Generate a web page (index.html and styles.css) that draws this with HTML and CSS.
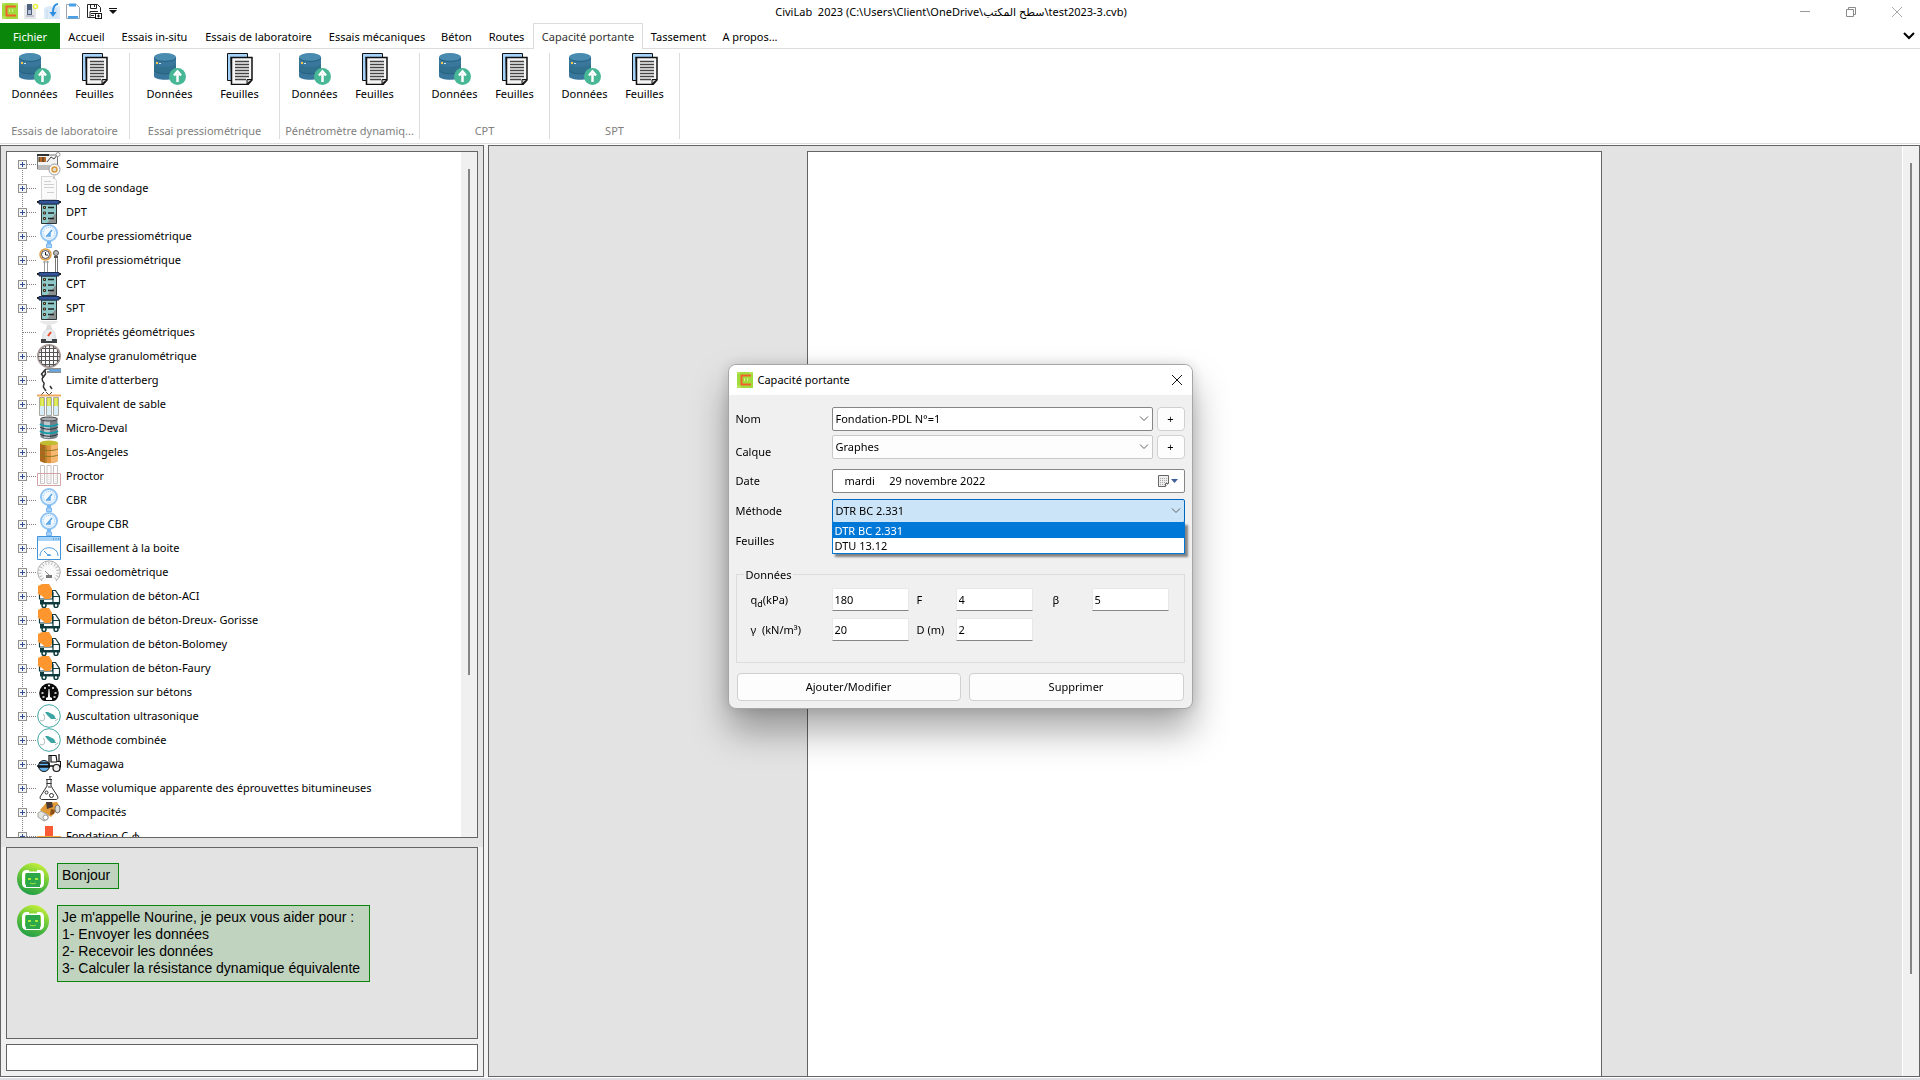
FILE: index.html
```html
<!DOCTYPE html>
<html lang="fr">
<head>
<meta charset="utf-8">
<title>CiviLab 2023</title>
<link rel="stylesheet" href="styles.css">
</head>
<body>
<svg class="sprite" aria-hidden="true">
  <symbol id="i-logo" viewBox="0 0 16 16"><rect width="16" height="16" fill="#9fdc3c"/><path d="M0 0h3v2H0zM12 0h4v2h-4zM0 13h4v3H0z" fill="#b4e455"/><path d="M14 3.500H4.500v9H14" fill="none" stroke="#f4602c" stroke-width="2"/><path d="M7.500 6v3M10.500 6v3" stroke="#d9ec8c"/></symbol>
  <symbol id="i-new" viewBox="0 0 16 16"><path d="M1 2h12v14H1z" fill="#e4e6ea"/><path d="M4 1h5v11H4z" fill="#4f617c"/><path d="M5 7h3v4H5z" fill="#b7c4d8"/><path d="M3 12h8v2H3z" fill="#c4c8ce"/><circle cx="12.500" cy="3.500" r="2" fill="#fff" stroke="#e8ee3c" stroke-width="1.500"/></symbol>
  <symbol id="i-open" viewBox="0 0 16 16"><path d="M0 5l5-2 6 1 5-1v13H0z" fill="#dcebf7"/><path d="M3 6v10M12 5v11" stroke="#c6dcef"/><path d="M14 1c-4 0-5 3-5 9" fill="none" stroke="#2f8ee0" stroke-width="2"/><path d="M5.500 9h7L9 14z" fill="#2f8ee0"/></symbol>
  <symbol id="i-page" viewBox="0 0 16 16"><path d="M1.500 1.500h10l3 3v11h-13z" fill="#fff" stroke="#9aa3ad"/><path d="M4 .500h7v3H4zM3 13h10v2.500H3z" fill="#4aa0e6"/></symbol>
  <symbol id="i-save" viewBox="0 0 16 16"><path d="M9 14.500H1.500v-13h10l3 3V9M4.500 1.500v4h6v-4M8.500 2v2M4 14V8.500h8" fill="none" stroke="#222"/><path d="M5 10.500h4M5 12.500h3" stroke="#222"/><rect x="9.500" y="10.500" width="6" height="5" fill="#fff" stroke="#111"/><path d="M11 13h3M12.500 11.500v3" stroke="#111"/></symbol>
  <symbol id="i-data" viewBox="0 0 32 32"><path d="M0 4v19c0 5 22 5 22 0V4z" fill="#39789c"/><path d="M0 10c0 5 22 5 22 0v7c0 5-22 5-22 0z" fill="#32708f"/><ellipse cx="11" cy="4" rx="11" ry="4" fill="#4a8bb0"/><path d="M0 5c1 4.500 21 4.500 22 0M0 17c1 5 21 5 22 0" fill="none" stroke="#27617e"/><path d="M2 9h2v2H2z" fill="#f5c84b"/><path d="M5 10h2v1H5z" fill="#c9e5f2"/><circle cx="23.500" cy="23.500" r="8.500" fill="#48b795"/><path d="M23.500 29v-8M20 22.500l3.500-4 3.500 4" fill="none" stroke="#fff" stroke-width="2.500"/></symbol>
  <symbol id="i-sheets" viewBox="0 0 26 32"><path d="M.500.500h20v27H.500z" fill="#a5d2f8" stroke="#111"/><path d="M4.500 4.500V31M4 4.500h21V27l-4 4.500H4.500z" fill="#f4f4f4" stroke="#111" stroke-width="1.500"/><path d="M8 8.500h14M8 11.500h14M8 14.500h14M8 17.500h14M8 20.500h14M8 23.500h14M8 26.500h11" stroke="#444" stroke-width="1.500"/><path d="M20 31v-4.500h5z" fill="#bbb" stroke="#111"/></symbol>
  <symbol id="i-summary" viewBox="0 0 24 24"><path d="M.500 3h20v14H.500z" fill="#f4f4f4" stroke="#777"/><path d="M0 2h12v2H0z" fill="#333"/><path d="M2 5h7v5H2z" fill="#b4682a"/><path d="M2 5v5M6 5v5" stroke="#332"/><path d="M1 13h12v4H1z" fill="#bdbdbd"/><path d="M10 10l4-5 3 2 4-5" fill="none" stroke="#444"/><circle cx="21" cy="2.500" r="2" fill="#fff" stroke="#999"/><circle cx="17.500" cy="17.500" r="5.500" fill="#fafafa" stroke="#999"/><circle cx="17.500" cy="17.500" r="2.500" fill="#ddd" stroke="#d99a35" stroke-width="1.500"/></symbol>
  <symbol id="i-log" viewBox="0 0 24 24"><path d="M4.500.500h11l4 4v19h-15z" fill="#fafafa" stroke="#d5d5d5"/><path d="M7 5.500h7M7 8.500h10M7 11.500h10M10 16.500h7" stroke="#cfcfcf"/><path d="M17 0v3" stroke="#aaa"/></symbol>
  <symbol id="i-probe" viewBox="0 0 24 24"><path d="M4.500 4h15v19.500h-15z" fill="#8fc9c8" stroke="#2d3436"/><path d="M19 13v10h-9z" fill="#8b9292"/><path d="M2 .500h20V4H2z" fill="#34569a" stroke="#1c2c50"/><path d="M0 2h2M22 2h2" stroke="#222" stroke-width="2"/><g fill="#e9a24a" stroke="#333"><path d="M6.500 6.500h2v2h-2zM6.500 12h2v2h-2zM6.500 17.500h2v2h-2z"/></g><path d="M11 7.500h6M11 13h6M11 18.500h6" stroke="#222" stroke-width="1.500"/></symbol>
  <symbol id="i-gauge" viewBox="0 0 24 24"><circle cx="12" cy="9" r="8" fill="#f4faff" stroke="#8fc4f5" stroke-width="2"/><circle cx="12" cy="9" r="5.500" fill="none" stroke="#8fc4f5" stroke-dasharray="1 1"/><path d="M10 12l5-6M9 12h4v-3" fill="none" stroke="#5aa4e6" stroke-width="1.500"/><path d="M12 17v3" stroke="#7ab8f2" stroke-width="4"/><path d="M9.500 20h5v3.500h-5z" fill="#a9d2f8" stroke="#7ab8f2"/></symbol>
  <symbol id="i-profile" viewBox="0 0 24 24"><path d="M7.500 13v11M10.500 13v11M6 14h6" stroke="#999"/><circle cx="8.500" cy="6.500" r="5.500" fill="#fff" stroke="#dd9d45" stroke-width="1.500"/><circle cx="8.500" cy="6.500" r="4" fill="none" stroke="#444"/><path d="M8.500 4v3H11" fill="none" stroke="#222"/><circle cx="19" cy="5" r="2.500" fill="#bbb" stroke="#555"/><path d="M17 8h4v2h-4z" fill="#555"/><path d="M18.500 10v14M20.500 10v14" stroke="#777"/></symbol>
  <symbol id="i-scale" viewBox="0 0 24 24"><path d="M3 1h18c-2 5-16 5-18 0z" fill="#e8e8e8"/><path d="M10 5h4l1 4H9z" fill="#ddd"/><path d="M6 20c-1-6 1-11 6-11s7 5 6 11z" fill="#e9edef" stroke="#d3d7d9"/><path d="M11 16l3-4" stroke="#ea4a2c" stroke-width="2"/><path d="M4 19h5v2h6v-2h5v4H4z" fill="#3c4246"/></symbol>
  <symbol id="i-sieve" viewBox="0 0 24 24"><circle cx="12" cy="12" r="11" fill="#fafafa" stroke="#a89a98" stroke-width="2"/><path d="M4.500 5v14M8.500 2v20M12.500 1v22M16.500 2v20M20.500 6v12M5 4.500h14M2 8.500h20M1 12.500h22M2 16.500h20M5 20.500h14" stroke="#555"/></symbol>
  <symbol id="i-atterberg" viewBox="0 0 24 24"><path d="M7 3c1-2 3-2 4-2h13M10 4h14" fill="none" stroke="#222"/><path d="M12 2.500h12" stroke="#5ca9ee" stroke-width="2"/><path d="M8 2L4.500 6l2 3 2-3zM6 9c-2 2 0 5 1 6s-2 3 0 5l2 3M13 18l2 3" fill="none" stroke="#333" stroke-width="1.500"/></symbol>
  <symbol id="i-tubes" viewBox="0 0 24 24"><path d="M4 3l3-3M9 0l3 3 3-3" fill="none" stroke="#444"/><path d="M0 3.500h24" stroke="#efa95c" stroke-width="2"/><path d="M2.500 5.500h5v18h-5zM9.500 5.500h5v18h-5zM16.500 5.500h5v18h-5z" fill="#d7edf7" stroke="#a8a8a0"/><path d="M3 6h4v8H3zM10 6h4v8h-4zM17 6h4v8h-4z" fill="#d3df35"/><path d="M5 6v8M12 6v8M19 6v8" stroke="#eef49a"/></symbol>
  <symbol id="i-drum" viewBox="0 0 24 24"><path d="M3.500 3v18c3 3 14 3 17 0V3z" fill="#777f86"/><path d="M7 3h6v19H7z" fill="#c0c6ca"/><path d="M3 8c4 3 14 3 18 0M3 15c4 3 14 3 18 0" fill="none" stroke="#149bab" stroke-width="2"/><path d="M3 11c4 3 14 3 18 0M3 18c4 3 14 3 18 0" fill="none" stroke="#26313a"/><ellipse cx="12" cy="3" rx="8.500" ry="2" fill="#a7adb2" stroke="#444"/></symbol>
  <symbol id="i-barrel" viewBox="0 0 24 24"><path d="M3 3v18c4 3 14 3 18 0V3z" fill="#e0913d"/><path d="M3 3v18l5 2V4z" fill="#ad681e"/><path d="M14 4h7v17l-7 2z" fill="#f6b871"/><path d="M3 9c4 2 14 2 18 0M3 15c4 2 14 2 18 0M9 4v19" fill="none" stroke="#8d7620"/><ellipse cx="12" cy="3" rx="9" ry="2.500" fill="#c2bc31"/></symbol>
  <symbol id="i-proctor" viewBox="0 0 24 24"><path d="M3.500 1.500h4v18h-4zM10 1.500h4v18h-4zM16.500 1.500h4v18h-4z" fill="#fff" stroke="#c9c4c4"/><path d="M.500 9.500h23v12H.500z" fill="none" stroke="#d4a2a2"/><path d="M5 11v8M12 11v8M19 11v8" stroke="#d7c0c0" stroke-dasharray="1 1"/></symbol>
  <symbol id="i-window" viewBox="0 0 24 24"><path d="M.500.500h23v23H.500z" fill="#fff" stroke="#3f93dd"/><path d="M1 1h22v4H1z" fill="#a8d4f8"/><path d="M16 3h1M18.500 3h1M21 3h1" stroke="#2274be"/><path d="M3 20c0-11 18-11 18 0M12 20L7 15" fill="none" stroke="#4a9ade"/><path d="M10 20a2 2 0 0 1 4 0z" fill="#4a9ade"/></symbol>
  <symbol id="i-dial" viewBox="0 0 24 24"><path d="M5 21a11.300 11.300 0 1 1 14 0" fill="#fafafa" stroke="#a9a9a9"/><path d="M6 19a9 9 0 1 1 12 0" fill="none" stroke="#bcbcbc" stroke-width="3" stroke-dasharray="1 2"/><path d="M12 15L8 11" stroke="#888"/><path d="M9 15h6v3H9z" fill="#777"/></symbol>
  <symbol id="i-mixer" viewBox="0 0 24 24"><path d="M2.500 9v6h13V6.500h3l4 6V19H16V8" fill="none" stroke="#0d3b3e" stroke-width="1.200"/><path d="M3 18h20v2.500H3zM3 16h4v3H3z" fill="#0d3b3e"/><path d="M16 12.500h6" stroke="#0d3b3e"/><circle cx="7" cy="21.500" r="2" fill="#fff" stroke="#0d3b3e" stroke-width="1.500"/><circle cx="19" cy="21.500" r="2" fill="#fff" stroke="#0d3b3e" stroke-width="1.500"/><path d="M1 2l4-2h7l3 5v7l-2 3H8L5 12 1 10z" fill="#fd962f"/></symbol>
  <symbol id="i-press" viewBox="0 0 24 24"><path d="M5 20a9.800 9.800 0 1 1 14 0l-2 1H7z" fill="#0a0a0a"/><path d="M11.500 9h1l.500 8 2 1v2H9v-2l2-1z" fill="#fff"/><path d="M4.500 13h2M17.500 13h2M7 8h2M15 8h2M11 5.500h2M5.500 17h2M16.500 17h2" stroke="#fff" stroke-width="1.500"/></symbol>
  <symbol id="i-sonic" viewBox="0 0 24 24"><circle cx="12" cy="12" r="11.300" fill="#fff" stroke="#3ca5a1"/><path d="M8 8l3 0 6 3 2 4-5 0-4-4z" fill="#3ca5a1"/><path d="M3 16c6 4 5-6 3-6M18 17l3-2" fill="none" stroke="#aab5b8"/></symbol>
  <symbol id="i-tractor" viewBox="0 0 24 24"><circle cx="7" cy="14" r="5.500" fill="#66b4ee" stroke="#111"/><path d="M0 14h16M2 11h10v4H1" fill="none" stroke="#111" stroke-width="1.500"/><path d="M12 10V3.500h7l1 6h3.500V15H17M14 4v6h6M22 2v7" fill="none" stroke="#111" stroke-width="1.200"/><circle cx="19.500" cy="16" r="3.500" fill="#eee" stroke="#111" stroke-width="1.200"/></symbol>
  <symbol id="i-flask" viewBox="0 0 24 24"><path d="M9 3.500h6M9.500 7.500h5M10 4v6L3 21c0 2 1 2.500 2 2.500h14c1 0 2-.500 2-2.500L14 10V4" fill="#fff" stroke="#333"/><path d="M12 0h3M13 0v3" stroke="#444"/><circle cx="9.500" cy="16.500" r="1.500" fill="none" stroke="#333"/><circle cx="14.500" cy="19.500" r="2" fill="none" stroke="#333"/><path d="M11 10h3v2h-3z" fill="#999"/></symbol>
  <symbol id="i-roller" viewBox="0 0 24 24"><path d="M3 10l6-7 11-1 3 5-9 10z" fill="#e19a37"/><path d="M9 2h6l1 5-6 2z" fill="#4b3934"/><path d="M14 9l4 1-1 4-4 1z" fill="#8d4f19"/><ellipse cx="20.500" cy="9" rx="2.500" ry="4" fill="#ddd" stroke="#777"/><path d="M1 13l3-2 7 4v4l-4 2-6-4z" fill="#e4e4e0" stroke="#a5a39b"/><circle cx="8.500" cy="17.500" r="2.500" fill="#fff" stroke="#999"/></symbol>
  <symbol id="i-footing" viewBox="0 0 24 24"><path d="M8 2h8v10H8z" fill="#fb5b34"/><path d="M0 12h24v6H0z" fill="#f8a63a"/></symbol>
  <symbol id="i-bot" viewBox="0 0 32 32"><defs><linearGradient id="botfill" x1=".7" y1="0" x2=".3" y2="1"><stop offset="0" stop-color="#c8f13a"/><stop offset=".5" stop-color="#63c43a"/><stop offset="1" stop-color="#1f9c48"/></linearGradient></defs><circle cx="16" cy="16" r="16" fill="url(#botfill)"/><rect x="6.500" y="8.500" width="19" height="15" rx="3" fill="none" stroke="#fff" stroke-width="3"/><path d="M12 7.500h8" stroke="#8fd934" stroke-width="2"/><path d="M9 10h14v14H9z" fill="#2ca74a"/><path d="M11 15h3v2h-3zM18 15h3v2h-3z" fill="#a9e83c"/><path d="M13 20c1 1 5 1 6 0" fill="none" stroke="#a9e83c"/></symbol>
  <symbol id="i-chev" viewBox="0 0 10 6"><path d="M1 .500l4 4 4-4" fill="none" stroke="#606060"/></symbol>
</svg>

<div class="app">
  <header class="titlebar">
    <div class="quick">
      <svg class="q"><use href="#i-logo"/></svg>
      <button aria-label="Nouveau"><svg class="q"><use href="#i-new"/></svg></button>
      <button aria-label="Ouvrir"><svg class="q"><use href="#i-open"/></svg></button>
      <button aria-label="Page"><svg class="q"><use href="#i-page"/></svg></button>
      <button aria-label="Enregistrer"><svg class="q"><use href="#i-save"/></svg></button>
      <button aria-label="Personnaliser" class="drop"><svg class="more" viewBox="0 0 8 6"><path d="M0 .500h8" stroke="#111"/><path d="M0 2h8L4 6z" fill="#111"/></svg></button>
    </div>
    <h1 class="title">CiviLab  2023 (C:\Users\Client\OneDrive\سطح المكتب\test2023-3.cvb)</h1>
    <div class="winbtns">
      <button aria-label="Réduire"><svg viewBox="0 0 10 10"><path d="M0 4.500h10" stroke="#999"/></svg></button>
      <button aria-label="Restaurer"><svg viewBox="0 0 10 10"><path d="M.500 2.500h7v7h-7zM2.500 2.500v-2h7v7h-2" fill="none" stroke="#8a8a8a"/></svg></button>
      <button aria-label="Fermer"><svg viewBox="0 0 10 10"><path d="M0 0l10 10M10 0L0 10" stroke="#aaa"/></svg></button>
    </div>
  </header>

  <nav class="tabs">
    <button class="tab file">Fichier</button>
    <button class="tab">Accueil</button>
    <button class="tab">Essais in-situ</button>
    <button class="tab">Essais de laboratoire</button>
    <button class="tab">Essais mécaniques</button>
    <button class="tab">Béton</button>
    <button class="tab">Routes</button>
    <button class="tab active">Capacité portante</button>
    <button class="tab">Tassement</button>
    <button class="tab">A propos...</button>
    <button class="collapse" aria-label="Réduire le ruban"><svg viewBox="0 0 12 8"><path d="M1 1l5 5 5-5" fill="none" stroke="#000" stroke-width="2"/></svg></button>
  </nav>

  <div class="ribbon">
    <section class="group">
      <div class="tools"><button><svg class="big"><use href="#i-data"/></svg>Données</button><button><svg class="big"><use href="#i-sheets"/></svg>Feuilles</button></div>
      <h2>Essais de laboratoire</h2>
    </section>
    <section class="group wide">
      <div class="tools"><button><svg class="big"><use href="#i-data"/></svg>Données</button><button><svg class="big"><use href="#i-sheets"/></svg>Feuilles</button></div>
      <h2>Essai pressiométrique</h2>
    </section>
    <section class="group medium">
      <div class="tools"><button><svg class="big"><use href="#i-data"/></svg>Données</button><button><svg class="big"><use href="#i-sheets"/></svg>Feuilles</button></div>
      <h2>Pénétromètre dynamiq...</h2>
    </section>
    <section class="group">
      <div class="tools"><button><svg class="big"><use href="#i-data"/></svg>Données</button><button><svg class="big"><use href="#i-sheets"/></svg>Feuilles</button></div>
      <h2>CPT</h2>
    </section>
    <section class="group">
      <div class="tools"><button><svg class="big"><use href="#i-data"/></svg>Données</button><button><svg class="big"><use href="#i-sheets"/></svg>Feuilles</button></div>
      <h2>SPT</h2>
    </section>
  </div>

  <div class="workspace">
    <aside class="side">
      <div class="treebox">
        <div class="tree">
          <ul>
            <li><button class="exp" aria-label="Développer"></button><svg class="ico"><use href="#i-summary"/></svg>Sommaire</li>
            <li><button class="exp" aria-label="Développer"></button><svg class="ico"><use href="#i-log"/></svg>Log de sondage</li>
            <li><button class="exp" aria-label="Développer"></button><svg class="ico"><use href="#i-probe"/></svg>DPT</li>
            <li><button class="exp" aria-label="Développer"></button><svg class="ico"><use href="#i-gauge"/></svg>Courbe pressiométrique</li>
            <li><button class="exp" aria-label="Développer"></button><svg class="ico"><use href="#i-profile"/></svg>Profil pressiométrique</li>
            <li><button class="exp" aria-label="Développer"></button><svg class="ico"><use href="#i-probe"/></svg>CPT</li>
            <li><button class="exp" aria-label="Développer"></button><svg class="ico"><use href="#i-probe"/></svg>SPT</li>
            <li><span class="leaf"></span><svg class="ico"><use href="#i-scale"/></svg>Propriétés géométriques</li>
            <li><button class="exp" aria-label="Développer"></button><svg class="ico"><use href="#i-sieve"/></svg>Analyse granulométrique</li>
            <li><button class="exp" aria-label="Développer"></button><svg class="ico"><use href="#i-atterberg"/></svg>Limite d'atterberg</li>
            <li><button class="exp" aria-label="Développer"></button><svg class="ico"><use href="#i-tubes"/></svg>Equivalent de sable</li>
            <li><button class="exp" aria-label="Développer"></button><svg class="ico"><use href="#i-drum"/></svg>Micro-Deval</li>
            <li><button class="exp" aria-label="Développer"></button><svg class="ico"><use href="#i-barrel"/></svg>Los-Angeles</li>
            <li><button class="exp" aria-label="Développer"></button><svg class="ico"><use href="#i-proctor"/></svg>Proctor</li>
            <li><button class="exp" aria-label="Développer"></button><svg class="ico"><use href="#i-gauge"/></svg>CBR</li>
            <li><button class="exp" aria-label="Développer"></button><svg class="ico"><use href="#i-gauge"/></svg>Groupe CBR</li>
            <li><button class="exp" aria-label="Développer"></button><svg class="ico"><use href="#i-window"/></svg>Cisaillement à la boite</li>
            <li><button class="exp" aria-label="Développer"></button><svg class="ico"><use href="#i-dial"/></svg>Essai oedomètrique</li>
            <li><button class="exp" aria-label="Développer"></button><svg class="ico"><use href="#i-mixer"/></svg>Formulation de béton-ACI</li>
            <li><button class="exp" aria-label="Développer"></button><svg class="ico"><use href="#i-mixer"/></svg>Formulation de béton-Dreux- Gorisse</li>
            <li><button class="exp" aria-label="Développer"></button><svg class="ico"><use href="#i-mixer"/></svg>Formulation de béton-Bolomey</li>
            <li><button class="exp" aria-label="Développer"></button><svg class="ico"><use href="#i-mixer"/></svg>Formulation de béton-Faury</li>
            <li><button class="exp" aria-label="Développer"></button><svg class="ico"><use href="#i-press"/></svg>Compression sur bétons</li>
            <li><button class="exp" aria-label="Développer"></button><svg class="ico"><use href="#i-sonic"/></svg>Auscultation ultrasonique</li>
            <li><button class="exp" aria-label="Développer"></button><svg class="ico"><use href="#i-sonic"/></svg>Méthode combinée</li>
            <li><button class="exp" aria-label="Développer"></button><svg class="ico"><use href="#i-tractor"/></svg>Kumagawa</li>
            <li><button class="exp" aria-label="Développer"></button><svg class="ico"><use href="#i-flask"/></svg>Masse volumique apparente des éprouvettes bitumineuses</li>
            <li><button class="exp" aria-label="Développer"></button><svg class="ico"><use href="#i-roller"/></svg>Compacités</li>
            <li><button class="exp" aria-label="Développer"></button><svg class="ico"><use href="#i-footing"/></svg>Fondation C-φ</li>
          </ul>
          <div class="bar"><div class="thumb"></div></div>
        </div>
      </div>
      <div class="chatbox">
        <div class="chat">
          <div class="msg"><svg class="bot"><use href="#i-bot"/></svg><p>Bonjour</p></div>
          <div class="msg"><svg class="bot"><use href="#i-bot"/></svg><p class="long">Je m'appelle Nourine, je peux vous aider pour :<br>1- Envoyer les données<br>2- Recevoir les données<br>3- Calculer la résistance dynamique équivalente</p></div>
        </div>
        <input class="ask" type="text" aria-label="Message">
      </div>
    </aside>

    <main class="canvas">
      <div class="view"><div class="page"></div></div>
      <div class="bar main-bar"><div class="thumb"></div></div>
    </main>
  </div>
</div>

<div class="overlay">
  <form class="dialog" role="dialog" aria-labelledby="dlg-title">
    <div class="dlg-head">
      <svg class="q"><use href="#i-logo"/></svg>
      <h2 id="dlg-title">Capacité portante</h2>
      <button type="button" aria-label="Fermer"><svg viewBox="0 0 12 12"><path d="M1 1l10 10M11 1L1 11" stroke="#111"/></svg></button>
    </div>
    <div class="dlg-body">
      <div class="fields">
        <label for="nom">Nom</label>
        <div class="combo strong"><select id="nom"><option>Fondation-PDL N°=1</option></select><svg class="chev"><use href="#i-chev"/></svg></div>
        <button type="button" class="btn">+</button>

        <label for="calque" class="low">Calque</label>
        <div class="combo"><select id="calque"><option>Graphes</option></select><svg class="chev"><use href="#i-chev"/></svg></div>
        <button type="button" class="btn">+</button>

        <label for="date">Date</label>
        <div class="combo strong full date"><input id="date" type="text" value="mardi     29 novembre 2022"><svg class="cal" viewBox="0 0 20 12"><path d="M.500.500h10v8l-3 3h-7z" fill="#eee" stroke="#666"/><path d="M2 3.500h7M2 5.500h7M2 7.500h7M2 9.500h5" stroke="#aaa" stroke-dasharray="1 1"/><path d="M10.500 8.500h-3v3" fill="#fff" stroke="#666"/><path d="M13 4h7l-3.500 4z" fill="#3f5f9a"/></svg></div>

        <label for="methode">Méthode</label>
        <div class="combo full open">
          <select id="methode"><option>DTR BC 2.331</option></select><svg class="chev"><use href="#i-chev"/></svg>
          <ul class="list" role="listbox" aria-label="Méthode"><li role="option" class="sel" aria-selected="true">DTR BC 2.331</li><li role="option">DTU 13.12</li></ul>
        </div>

        <label for="feuilles">Feuilles</label>
        <div class="combo full"><select id="feuilles"></select></div>
      </div>

      <fieldset>
        <legend>Données</legend>
        <div class="data">
          <label for="qd">q<sub>d</sub>(kPa)</label><input id="qd" type="text" value="180">
          <label for="f">F</label><input id="f" type="text" value="4">
          <label for="beta" class="far">β</label><input id="beta" type="text" value="5">
          <label for="gamma">γ&nbsp; (kN/m³)</label><input id="gamma" type="text" value="20">
          <label for="d">D (m)</label><input id="d" type="text" value="2">
        </div>
      </fieldset>

      <div class="actions">
        <button type="button" class="btn">Ajouter/Modifier</button>
        <button type="button" class="btn">Supprimer</button>
      </div>
    </div>
  </form>
</div>
</body>
</html>
```
FILE: styles.css
```css
* { box-sizing: border-box; }
body, h1, h2, p, ul { margin: 0; padding: 0; }
body, button, input, select {
  font: 11px/16px "Noto Sans", "Open Sans", "DejaVu Sans", sans-serif;
  color: #000;
}
button { border: 0; padding: 0; background: none; }
ul { list-style: none; }
svg { display: block; flex: none; }
.sprite { position: absolute; width: 0; height: 0; }

.app { display: flex; flex-direction: column; height: 100vh; background: #fff; border-bottom: 2px solid #dddce1; }

/* Title bar */
.titlebar { display: flex; height: 23px; flex: none; }
.quick { display: flex; align-items: center; gap: 5px; width: 120px; padding: 0 0 2px 2px; }
.q { width: 16px; height: 16px; }
.drop { padding-left: 2px; }
.more { width: 8px; height: 6px; }
.title { flex: 1; text-align: center; font-size: 11px; font-weight: 400; line-height: 24px; white-space: pre; }
.winbtns { display: flex; }
.winbtns button { width: 46px; display: grid; place-items: center; }
.winbtns svg { width: 10px; height: 10px; }

/* Tabs */
.tabs {
  display: grid; flex: none; height: 26px; border-bottom: 1px solid #dcdcdc;
  grid-template-columns: 60px 53px 83px 125px 112px 47px 53px 110px 71px 72px 1fr;
}
.tab { white-space: nowrap; line-height: 25px; }
.tab.file { background: #0a860a; color: #fff; }
.tab.active { height: 26px; background: #fff; border: 1px solid #dcdcdc; border-bottom: 0; color: #333; line-height: 23px; }
.collapse { justify-self: end; width: 22px; display: grid; place-items: center; }
.collapse svg { width: 12px; height: 8px; }

/* Ribbon */
.ribbon { display: flex; flex: none; height: 95px; padding: 4px 0; border-bottom: 1px solid #dcdcdc; margin-bottom: 1px; }
.group { width: 130px; display: flex; flex-direction: column; justify-content: space-between; border-right: 1px solid #dcdcdc; }
.tools { display: flex; justify-content: center; }
.tools button { width: 60px; display: grid; justify-items: center; gap: 1px; }
.big { width: 32px; height: 32px; }
.group h2 { font-size: 11px; font-weight: 400; color: #808080; text-align: center; white-space: nowrap; }
.group.wide { width: 150px; }
.group.wide button { width: 70px; }
.group.medium { width: 140px; }
.group.medium .tools { padding-right: 10px; }

/* Workspace */
.workspace { flex: 1; min-height: 0; display: flex; gap: 4px; background: #f3f3f3; margin-bottom: 1px; }
.side { width: 484px; flex: none; display: flex; flex-direction: column; border: 1px solid #646464; background: #f0f0f0; }
.treebox { flex: 1; min-height: 0; display: flex; padding: 5px 5px 9px; background: #e3e3e3; }
.tree { flex: 1; display: flex; overflow: hidden; border: 1px solid #646464; background: #fff; }
.tree ul { flex: 1; }
.tree li {
  display: flex; align-items: center; height: 24px; padding-left: 11px; white-space: nowrap;
  background:
    repeating-linear-gradient(#808080 0 1px, transparent 1px 2px) 15px 0 / 1px 24px no-repeat,
    repeating-linear-gradient(90deg, #808080 0 1px, transparent 1px 2px) 16px 12px / 14px 1px no-repeat;
}
.tree li:first-child { background-position: 15px 12px, 16px 12px; }
.ico { width: 24px; height: 24px; margin: 0 5px 0 10px; }
.exp {
  width: 9px; height: 9px; border: 1px solid #919191; margin-top: 1px;
  background:
    linear-gradient(#2f4f97, #2f4f97) center / 5px 1px no-repeat,
    linear-gradient(#2f4f97, #2f4f97) center / 1px 5px no-repeat, #f4f4f4;
}
.leaf { width: 9px; }
.bar { width: 16px; flex: none; background: #f0f0f0; display: flex; justify-content: center; padding: 17px 0 162px; }
.thumb { width: 2px; background: #858585; }

.chatbox { flex: none; padding: 0 5px 5px; display: grid; gap: 5px; }
.chat { height: 192px; border: 1px solid #646464; background: #e3e3e3; padding: 15px 10px; display: flex; flex-direction: column; gap: 10px; }
.msg { display: flex; gap: 8px; align-items: flex-start; }
.bot { width: 32px; height: 32px; }
.msg p { border: 1px solid #0a860a; background: #c0d3bf; padding: 3px 8px 4px 4px; font: 14px/17px "Liberation Sans", Arial, sans-serif; }
.msg p.long { padding-right: 9px; }
.ask { width: 100%; height: 27px; border: 1px solid #646464; padding: 0 4px; background: #fff; }

.canvas { flex: 1; display: flex; border: 1px solid #646464; background: #e3e3e3; }
.view { flex: 1; display: flex; justify-content: center; padding: 5px 0 0 17px; }
.page { width: 795px; border: 1px solid #646464; border-bottom: 0; background: #fff; }
.main-bar { width: 17px; border-left: 1px solid #fff; padding-bottom: 102px; }

/* Dialog */
.overlay { position: fixed; inset: 0; display: grid; place-items: center; padding-bottom: 8px; }
.dialog { width: 465px; border: 1px solid #a6a6a6; border-radius: 8px; background: #f0f0f0; box-shadow: 0 22px 36px rgba(0, 0, 0, .34), 0 0 14px rgba(0, 0, 0, .14); }
.dlg-head { display: flex; align-items: center; height: 30px; padding: 0 9px 0 8px; background: #fff; border-radius: 7px 7px 0 0; }
.dlg-head h2 { flex: 1; margin-left: 5px; font-size: 11px; font-weight: 400; }
.dlg-head button svg { width: 12px; height: 12px; }
.dlg-body { padding: 12px 7px 7px; }
.fields { display: grid; grid-template-columns: 96px 1fr 28px; grid-template-rows: 28px 34px 30px 30px 24px; column-gap: 0; align-items: start; }
.fields > label { line-height: 24px; }
.fields > label.low { align-self: center; }
.combo { position: relative; display: grid; align-items: center; margin-right: 4px; }
.combo.full { grid-column: 2 / 4; margin-right: 0; }
.combo select, .combo input { grid-area: 1 / 1; width: 100%; height: 24px; appearance: none; border: 1px solid #c8c8c8; border-radius: 2px; background: #fdfdfd; padding: 0 3px; }
.combo.strong select, .combo.strong input { border-color: #868686; background: #fff; }
.combo.date input { padding-left: 12px; white-space: pre; }
.combo.open select { border-color: #0067c0; background: #cce4f7; }
.chev, .cal { grid-area: 1 / 1; justify-self: end; }
.chev { width: 10px; height: 6px; margin-right: 4px; }
.cal { width: 20px; height: 12px; margin-right: 7px; }
.list { position: absolute; top: 23px; left: 0; right: 0; z-index: 1; border: 1px solid #0078d7; background: #fff; box-shadow: 3px 3px 2px rgba(0, 0, 0, .45); }
.list li { height: 15px; line-height: 15px; padding-left: 2px; }
.list .sel { background: #0078d7; color: #fff; }
.btn { height: 24px; border: 1px solid #d0d0d0; border-radius: 4px; background: #fdfdfd; }

fieldset { margin: 14px 0 0; padding: 5px 13px 19px; border: 1px solid #dcdcdc; height: 96px; }
legend { padding: 0 2px; margin-left: -6px; }
.data { display: grid; grid-template-columns: 82px 77px 47px 77px 59px 77px; grid-auto-rows: 24px; row-gap: 6px; align-items: center; }
.data label { padding-left: 8px; }
.data label:nth-of-type(3n + 1) { padding-left: 1px; }
.data label.far { padding-left: 20px; }
.data sub { font-size: 9px; line-height: 0; }
.data input { width: 100%; height: 23px; border: 1px solid #e8e8e8; border-bottom-color: #868686; background: #fff; padding: 0 2px; }
.actions { display: grid; grid-template-columns: 224px 215px; gap: 8px; margin-top: 10px; padding-left: 1px; }
.actions .btn { height: 28px; }
```
